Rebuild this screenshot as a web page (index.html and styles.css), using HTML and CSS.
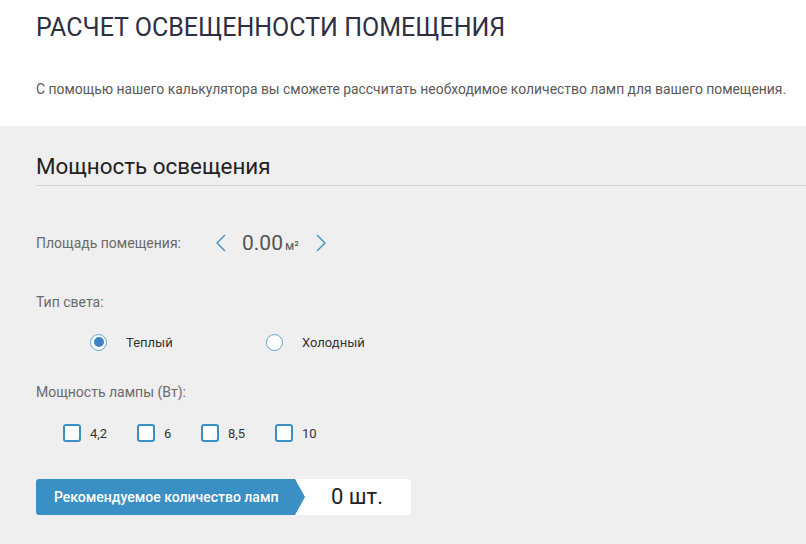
FILE: index.html
```html
<!DOCTYPE html>
<html lang="ru">
<head>
<meta charset="utf-8">
<title>Расчет освещенности помещения</title>
<link rel="stylesheet" href="styles.css">
</head>
<body>
<header class="intro">
  <h1 class="title">РАСЧЕТ ОСВЕЩЕННОСТИ ПОМЕЩЕНИЯ</h1>
  <p class="lead">С помощью нашего калькулятора вы сможете рассчитать необходимое количество ламп для вашего помещения.</p>
</header>
<main class="calc">
  <h2 class="section-title">Мощность освещения</h2>
  <div class="row area-row">
    <span class="label">Площадь помещения:</span>
    <div class="stepper">
      <svg class="arrow" width="12" height="18" viewBox="0 0 12 18"><path d="M10 1 L2 9 L10 17" fill="none" stroke="#3a8fc4" stroke-width="1.3"/></svg>
      <span class="value">0.00<span class="unit">м²</span></span>
      <svg class="arrow" width="12" height="18" viewBox="0 0 12 18"><path d="M2 1 L10 9 L2 17" fill="none" stroke="#3a8fc4" stroke-width="1.3"/></svg>
    </div>
  </div>
  <div class="label type-label">Тип света:</div>
  <div class="radios">
    <label class="radio-item warm"><span class="radio checked"></span><span class="opt">Теплый</span></label>
    <label class="radio-item"><span class="radio"></span><span class="opt">Холодный</span></label>
  </div>
  <div class="label power-label">Мощность лампы (Вт):</div>
  <div class="checks">
    <label class="check-item w1"><span class="box"></span><span class="opt">4,2</span></label>
    <label class="check-item w2"><span class="box"></span><span class="opt">6</span></label>
    <label class="check-item w3"><span class="box"></span><span class="opt">8,5</span></label>
    <label class="check-item"><span class="box"></span><span class="opt">10</span></label>
  </div>
  <div class="result">
    <div class="result-label">Рекомендуемое количество ламп</div>
    <div class="result-value">0 шт.</div>
  </div>
</main>
</body>
</html>
```

FILE: styles.css
```css
html, body {
  margin: 0;
  padding: 0;
}
body {
  font-family: Roboto, "Liberation Sans", sans-serif;
  background: #efefef;
  width: 806px;
  height: 544px;
  overflow: hidden;
}
.intro {
  background: #ffffff;
  padding: 12px 0 0 36px;
  height: 114px;
}
.title {
  margin: 0;
  font-weight: 400;
  font-size: 25px;
  line-height: 32px;
  color: #2e2f42;
}
.lead {
  margin: 36px 0 0;
  font-size: 13.9px;
  line-height: 18px;
  color: #5a5a5a;
}
.calc {
  padding: 0 0 0 36px;
}
.section-title {
  margin: 0;
  padding: 27px 0 6px;
  font-weight: 400;
  font-size: 22.4px;
  line-height: 26px;
  color: #222;
  border-bottom: 1px solid #d4d4d4;
}
.label {
  font-size: 14px;
  line-height: 18px;
  color: #6a6a6a;
}
.row {
  display: flex;
  align-items: center;
}
.area-row {
  margin-top: 44px;
  height: 26px;
}
.stepper {
  display: flex;
  align-items: center;
  margin-left: 34px;
}
.value {
  font-size: 21px;
  color: #555;
  margin: 0 16px 0 15px;
}
.unit {
  font-size: 12.5px;
  margin-left: 2px;
}
.type-label {
  margin-top: 37px;
}
.radios {
  display: flex;
  margin: 21px 0 0 54px;
  height: 20px;
}
.radio-item {
  display: flex;
  align-items: center;
}
.radio-item.warm {
  width: 176px;
}
.radio {
  width: 15px;
  height: 15px;
  border-radius: 50%;
  border: 1.5px solid #62a4d2;
  background: #fff;
  position: relative;
  margin-right: 19px;
}
.radio.checked::after {
  content: "";
  position: absolute;
  left: 2.5px;
  top: 2.5px;
  width: 10px;
  height: 10px;
  border-radius: 50%;
  background: #3b82c6;
}
.opt {
  font-size: 13px;
  color: #333;
}
.power-label {
  margin-top: 31px;
}
.checks {
  display: flex;
  margin: 22px 0 0 27px;
  height: 20px;
}
.check-item {
  display: flex;
  align-items: center;
}
.check-item.w1 { width: 74px; }
.check-item.w2 { width: 64px; }
.check-item.w3 { width: 74px; }
.box {
  width: 14px;
  height: 14px;
  border: 2px solid #3a8fc4;
  border-radius: 3px;
  background: #fff;
  margin-right: 9px;
}
.result {
  display: flex;
  margin-top: 36px;
  height: 36px;
}
.result-label {
  position: relative;
  background: #3a8fc4;
  color: #fff;
  font-size: 14px;
  font-weight: 500;
  line-height: 36px;
  padding-left: 18px;
  width: 241px;
  border-radius: 3px 0 0 3px;
  z-index: 1;
}
.result-label::after {
  content: "";
  position: absolute;
  right: -10px;
  top: 0;
  border-left: 10px solid #3a8fc4;
  border-top: 18px solid transparent;
  border-bottom: 18px solid transparent;
}
.result-value {
  background: #fff;
  width: 116px;
  border-radius: 0 3px 3px 0;
  font-size: 22px;
  color: #222;
  line-height: 36px;
  text-align: center;
  box-sizing: border-box;
  padding-left: 8px;
}
```
